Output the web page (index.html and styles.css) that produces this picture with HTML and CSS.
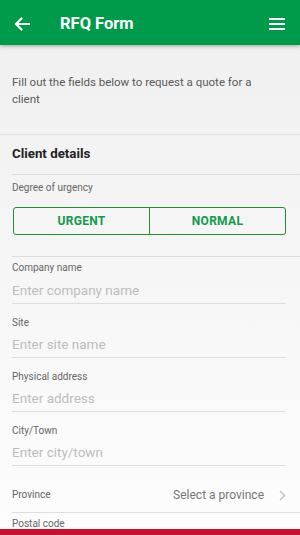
FILE: index.html
```html
<!DOCTYPE html>
<html>
<head>
<meta charset="utf-8">
<link rel="stylesheet" href="styles.css">
</head>
<body>
<header class="topbar">
  <svg class="icon back" width="16" height="14" viewBox="0 0 16 14"><path d="M15 7H2M7.5 1.5L2 7l5.5 5.5" fill="none" stroke="#fff" stroke-width="2" stroke-linecap="square"/></svg>
  <h1 class="title">RFQ Form</h1>
  <svg class="icon menu" width="16" height="12" viewBox="0 0 16 12"><path d="M0 1h16M0 6h16M0 11h16" stroke="#fff" stroke-width="2"/></svg>
</header>
<main class="content">
  <p class="intro">Fill out the fields below to request a quote for a client</p>
  <div class="section">
    <h2 class="section-title">Client details</h2>
    <div class="urgency">
      <div class="label">Degree of urgency</div>
      <div class="segmented">
        <button class="seg">URGENT</button>
        <button class="seg">NORMAL</button>
      </div>
    </div>
    <div class="field first">
      <div class="label">Company name</div>
      <div class="placeholder">Enter company name</div>
    </div>
    <div class="field">
      <div class="label">Site</div>
      <div class="placeholder">Enter site name</div>
    </div>
    <div class="field">
      <div class="label">Physical address</div>
      <div class="placeholder">Enter address</div>
    </div>
    <div class="field">
      <div class="label">City/Town</div>
      <div class="placeholder">Enter city/town</div>
    </div>
    <div class="select-row">
      <span class="select-label">Province</span>
      <span class="select-value">Select a province</span>
      <svg class="chev" width="7" height="11" viewBox="0 0 7 11"><path d="M1 1l4.5 4.5L1 10" fill="none" stroke="#bbb" stroke-width="1.3"/></svg>
    </div>
    <div class="field first">
      <div class="label">Postal code</div>
    </div>
  </div>
</main>
<div class="bottom-bar"></div>
</body>
</html>
```
FILE: styles.css
```css
* { box-sizing: border-box; }
html, body { margin: 0; padding: 0; }
body {
  font-family: Roboto, "Noto Sans", sans-serif;
  background: linear-gradient(#efefef, #fdfdfd 535px);
  min-height: 535px;
  overflow: hidden;
}
.topbar {
  height: 45px;
  background: #009a4b;
  display: flex;
  align-items: center;
  padding: 2px 15px 0 14px;
  box-shadow: 0 1px 4px rgba(0,0,0,0.35);
  position: relative;
  z-index: 1;
}
.icon { display: block; flex: none; }
.title {
  margin: 0 0 0 30px;
  flex: 1;
  color: #fff;
  font-size: 16.5px;
  font-weight: 700;
  line-height: 20px;
}
.content { padding: 0; }
.intro {
  margin: 0;
  padding: 29px 30px 26px 12px;
  font-size: 11.5px;
  line-height: 17px;
  color: #5a5a5a;
  border-bottom: 1px solid #ddd;
}
.section { padding-left: 12px; }
.section-title {
  margin: 0;
  padding: 10px 0 11px;
  font-size: 13.3px;
  line-height: 18px;
  font-weight: 700;
  color: #222;
  border-bottom: 1px solid #ddd;
}
.urgency {
  padding: 7px 0 21px;
  border-bottom: 1px solid #ddd;
}
.label {
  font-size: 10px;
  line-height: 12px;
  color: #666;
}
.segmented {
  display: flex;
  margin: 13px 14px 0 1px;
  height: 28px;
  border: 1.5px solid #1f8f32;
  border-radius: 3px;
  overflow: hidden;
}
.seg {
  flex: 1;
  border: 0;
  background: transparent;
  font-family: inherit;
  font-size: 12px;
  font-weight: 700;
  letter-spacing: 0.3px;
  color: #129a4c;
  padding: 0;
}
.seg + .seg { border-left: 1.5px solid #1f8f32; }
.field {
  margin-right: 14px;
  padding: 13px 0 3px;
  border-bottom: 1px solid #ddd;
}
.field.first { padding-top: 5px; }
.placeholder {
  margin-top: 6px;
  font-size: 13.5px;
  line-height: 20px;
  color: #bdbdbd;
}
.field.first .placeholder { margin-top: 6px; }
.field + .field .placeholder { margin-top: 5px; }
.select-row {
  display: flex;
  align-items: center;
  padding: 23px 14px 11px 0;
  border-bottom: 1px solid #ddd;
  line-height: 12px;
}
.select-label { flex: 1; font-size: 10px; color: #666; }
.select-value { font-size: 12px; color: #777; margin-right: 15px; }
.chev { display: block; }
.bottom-bar {
  position: fixed;
  left: 0; right: 0; bottom: 0;
  height: 6px;
  background: #c8102e;
}
```
